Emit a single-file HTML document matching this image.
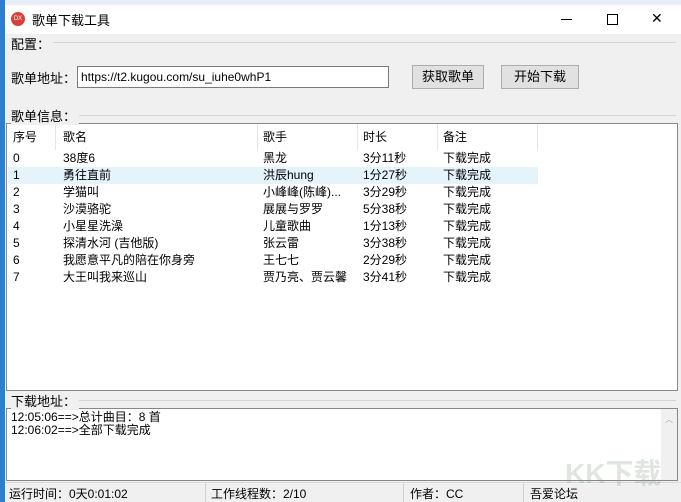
<!DOCTYPE html>
<html><head><meta charset="utf-8"><style>
*{margin:0;padding:0;box-sizing:border-box}
body{width:681px;height:502px;overflow:hidden;position:relative;background:#f0f0f0;font-family:"Liberation Sans","Noto Sans CJK SC",sans-serif;font-size:12px;color:#000}
.a{position:absolute}
.lb{background:#f0f0f0;padding-right:3px;z-index:2}
.row{position:absolute;left:8px;width:530px;height:17px;line-height:17px}
.row span{position:absolute}
</style></head><body>
<div class="a" style="left:0;top:0;width:681px;height:5px;background:#e8eef6;overflow:hidden"></div>
<div class="a" style="left:0;top:0;width:5px;height:502px;background:#2a7fd0"></div>
<div class="a" style="left:5px;top:5px;width:676px;height:29px;background:#fff"></div>
<div class="a" style="left:11px;top:12px;width:14px;height:14px;border-radius:50%;background:#d9403a;color:#fff;font-size:6px;line-height:14px;text-align:center">DX</div>
<div class="a" style="left:32px;top:10px;font-size:13px">歌单下载工具</div>
<div class="a" style="left:561px;top:19px;width:11px;height:1px;background:#000"></div>
<div class="a" style="left:607px;top:14px;width:11px;height:11px;border:1px solid #000"></div>
<div class="a" style="left:651px;top:10px;font-size:14px;font-weight:300">✕</div>
<div class="a" style="left:48px;top:42px;width:628px;height:1px;background:#d5d5d5"></div>
<div class="a lb" style="left:11px;top:34px;font-size:13px">配置：</div>
<div class="a" style="left:11px;top:68px;font-size:13px">歌单地址：</div>
<div class="a" style="left:77px;top:66px;width:312px;height:22px;border:1px solid #7a7a7a;background:#fff;padding-left:3px;line-height:20px">https://t2.kugou.com/su_iuhe0whP1</div>
<div class="a" style="left:412px;top:65px;width:72px;height:24px;border:1px solid #adadad;background:#e1e1e1;text-align:center;line-height:22px;font-size:13px">获取歌单</div>
<div class="a" style="left:501px;top:65px;width:78px;height:24px;border:1px solid #adadad;background:#e1e1e1;text-align:center;line-height:22px;font-size:13px">开始下载</div>
<div class="a" style="left:60px;top:115px;width:616px;height:1px;background:#d5d5d5"></div>
<div class="a lb" style="left:11px;top:106px;font-size:13px">歌单信息：</div>
<div class="a" style="left:6px;top:123px;width:672px;height:268px;border:1px solid #828790;background:#fff"></div>
<div class="a" style="left:7px;top:124px;width:670px;height:26px;font-size:12px;line-height:26px">
<span class="a" style="left:6px">序号</span><span class="a" style="left:56px">歌名</span><span class="a" style="left:256px">歌手</span><span class="a" style="left:356px">时长</span><span class="a" style="left:436px">备注</span>
<div class="a" style="left:48px;top:0;width:1px;height:26px;background:#e5e5e5"></div>
<div class="a" style="left:250px;top:0;width:1px;height:26px;background:#e5e5e5"></div>
<div class="a" style="left:350px;top:0;width:1px;height:26px;background:#e5e5e5"></div>
<div class="a" style="left:430px;top:0;width:1px;height:26px;background:#e5e5e5"></div>
<div class="a" style="left:530px;top:0;width:1px;height:26px;background:#e5e5e5"></div>
</div>
<div class="row" style="top:150px"><span style="left:5px">0</span><span style="left:55px">38度6</span><span style="left:255px">黑龙</span><span style="left:355px">3分11秒</span><span style="left:435px">下载完成</span></div>
<div class="row" style="top:167px;background:#e5f3fb"><span style="left:5px">1</span><span style="left:55px">勇往直前</span><span style="left:255px">洪辰hung</span><span style="left:355px">1分27秒</span><span style="left:435px">下载完成</span></div>
<div class="row" style="top:184px"><span style="left:5px">2</span><span style="left:55px">学猫叫</span><span style="left:255px">小峰峰(陈峰)...</span><span style="left:355px">3分29秒</span><span style="left:435px">下载完成</span></div>
<div class="row" style="top:201px"><span style="left:5px">3</span><span style="left:55px">沙漠骆驼</span><span style="left:255px">展展与罗罗</span><span style="left:355px">5分38秒</span><span style="left:435px">下载完成</span></div>
<div class="row" style="top:218px"><span style="left:5px">4</span><span style="left:55px">小星星洗澡</span><span style="left:255px">儿童歌曲</span><span style="left:355px">1分13秒</span><span style="left:435px">下载完成</span></div>
<div class="row" style="top:235px"><span style="left:5px">5</span><span style="left:55px">探清水河 (吉他版)</span><span style="left:255px">张云雷</span><span style="left:355px">3分38秒</span><span style="left:435px">下载完成</span></div>
<div class="row" style="top:252px"><span style="left:5px">6</span><span style="left:55px">我愿意平凡的陪在你身旁</span><span style="left:255px">王七七</span><span style="left:355px">2分29秒</span><span style="left:435px">下载完成</span></div>
<div class="row" style="top:269px"><span style="left:5px">7</span><span style="left:55px">大王叫我来巡山</span><span style="left:255px">贾乃亮、贾云馨</span><span style="left:355px">3分41秒</span><span style="left:435px">下载完成</span></div>
<div class="a" style="left:60px;top:400px;width:616px;height:1px;background:#d5d5d5"></div>
<div class="a lb" style="left:11px;top:391px;font-size:13px">下载地址：</div>
<div class="a" style="left:6px;top:408px;width:672px;height:73px;border:1px solid #828790;background:#fff"></div>
<div class="a" style="left:661px;top:409px;width:16px;height:71px;background:#f0f0f0"></div>
<div class="a" style="left:665px;top:414px;font-size:8px;color:#a0a0a0">︿</div>
<div class="a" style="left:11px;top:411px;line-height:13px;font-size:12px">12:05:06==&gt;总计曲目：8 首<br>12:06:02==&gt;全部下载完成</div>
<div class="a" style="left:5px;top:482px;width:676px;height:20px;background:#f0f0f0;border-top:1px solid #d9d9d9"></div>
<div class="a" style="left:9px;top:485px;font-size:12px">运行时间：0天0:01:02</div>
<div class="a" style="left:205px;top:483px;width:1px;height:19px;background:#d0d0d0"></div>
<div class="a" style="left:211px;top:485px">工作线程数：2/10</div>
<div class="a" style="left:403px;top:483px;width:1px;height:19px;background:#d0d0d0"></div>
<div class="a" style="left:410px;top:485px">作者：CC</div>
<div class="a" style="left:523px;top:483px;width:1px;height:19px;background:#d0d0d0"></div>
<div class="a" style="left:530px;top:485px">吾爱论坛</div>
<div class="a" style="left:565px;top:452px;font-size:28px;font-weight:bold;color:rgba(130,150,130,.25)">KK下载</div>
</body></html>
